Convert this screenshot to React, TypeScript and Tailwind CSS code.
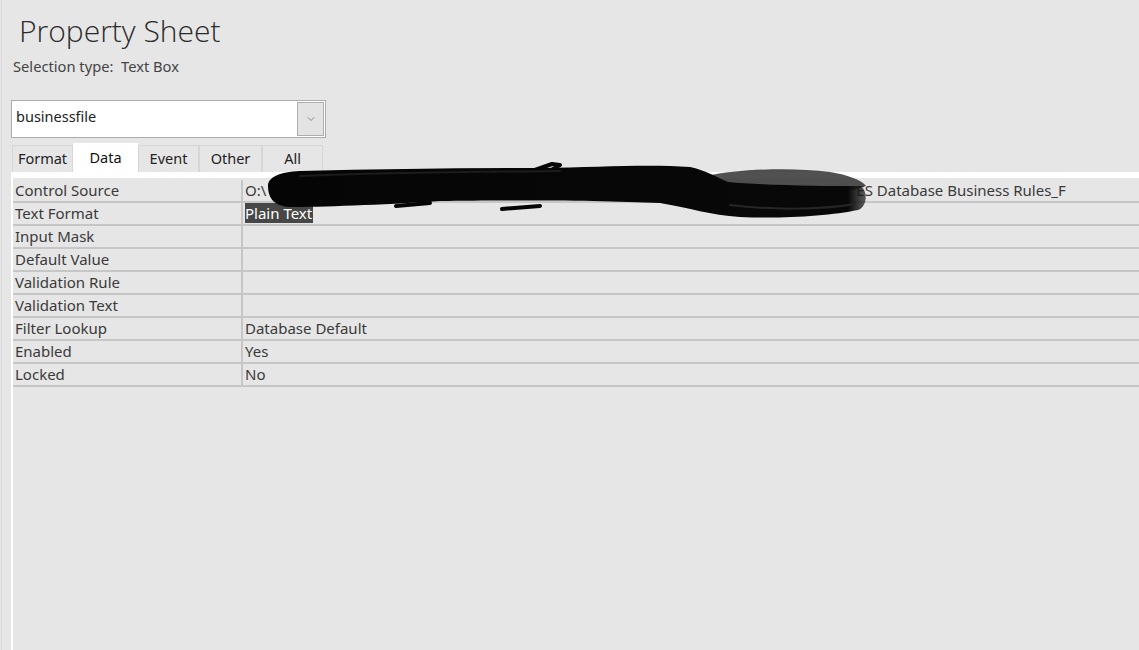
import { ChevronDown } from 'lucide-react';

const ROWS: { label: string; value?: string; selected?: boolean; path?: boolean }[] = [
  { label: 'Control Source', path: true },
  { label: 'Text Format', value: 'Plain Text', selected: true },
  { label: 'Input Mask' },
  { label: 'Default Value' },
  { label: 'Validation Rule' },
  { label: 'Validation Text' },
  { label: 'Filter Lookup', value: 'Database Default' },
  { label: 'Enabled', value: 'Yes' },
  { label: 'Locked', value: 'No' },
];

const TABS = [
  { name: 'Format', w: 'w-[61px]' },
  { name: 'Data', w: 'w-[65px]' },
  { name: 'Event', w: 'w-[61px]' },
  { name: 'Other', w: 'w-[63px]' },
  { name: 'All', w: 'w-[61px]' },
];

const font = 'font-["Noto_Sans","Liberation_Sans",sans-serif]';

export default function App() {
  return (
    <div className={`relative w-[1139px] h-[650px] overflow-hidden bg-[#e6e6e6] text-[#333] ${font}`}>
      <div className="flex h-full flex-col pl-px">
        <div className="flex h-full flex-col border-l border-[#d9d9d9]">
          {/* Header */}
          <h1 className='pl-[17px] pt-[11px] text-[30px] leading-[40px] font-light text-[#2b2b2b] font-["Open_Sans",sans-serif]'>
            Property Sheet
          </h1>
          <p className="pl-[11px] pt-[5px] text-[14.7px] leading-[20px] text-[#444]">Selection type:&nbsp; Text Box</p>

          {/* Object selector */}
          <div className="ml-[9px] mt-[24px] flex h-[38px] w-[315px] items-center border border-[#acacac] bg-white">
            <span className="flex-1 pl-[4px] pb-[4px] text-[14.5px] text-[#222]">businessfile</span>
            <div className="mr-px flex h-[34px] w-[27px] items-center justify-center border border-[#adadad] bg-[#e3e3e3]">
              <ChevronDown size={12} strokeWidth={1.25} className="text-[#555]" />
            </div>
          </div>

          {/* Tabs */}
          <div className="ml-[10px] mt-[5px] flex h-[29px] items-end">
            {TABS.map((t) =>
              t.name === 'Data' ? (
                <div
                  key={t.name}
                  className={`${t.w} flex h-[29px] items-start justify-center bg-white pt-[4px] text-[14.5px] text-[#111]`}
                >
                  {t.name}
                </div>
              ) : (
                <div
                  key={t.name}
                  className={`${t.w} flex h-[27px] items-center justify-center border border-b-0 border-[#d6d6d6] text-[14.5px] text-[#222]`}
                >
                  {t.name}
                </div>
              )
            )}
          </div>

          {/* Grid */}
          <div className="ml-[9px] flex-1 border-l-2 border-t-[6px] border-white">
            {ROWS.map((r, i) => (
              <div
                key={r.label}
                className={`flex border-b-2 border-[#c6c6c6] text-[15px] leading-[21px] text-[#3a3a3a] ${i === 0 ? 'h-[25px] pt-[2px]' : 'h-[23px]'}`}
              >
                <div className="w-[230px] shrink-0 border-r-2 border-[#c6c6c6] pl-[2px]">{r.label}</div>
                <div className="flex-1 whitespace-nowrap pl-[2px]">
                  {r.path ? (
                    <>
                      O:\<span className="inline-block w-[590px]" />ES Database Business Rules_F
                    </>
                  ) : r.selected ? (
                    <span className="bg-[#474747] pr-[1px] text-white">{r.value}</span>
                  ) : (
                    r.value
                  )}
                </div>
              </div>
            ))}
          </div>
        </div>
      </div>

      {/* redaction scribble */}
      <svg className="pointer-events-none absolute left-0 top-0" width="1139" height="650" viewBox="0 0 1139 650">
        <defs>
          <linearGradient id="fade" x1="0" x2="1" y1="0" y2="0">
            <stop offset="0" stopColor="#050505" />
            <stop offset="0.97" stopColor="#080808" />
            <stop offset="1" stopColor="#202020" stopOpacity="0.7" />
          </linearGradient>
        </defs>
        <path
          d="M706 176 C 740 169, 790 167, 830 172 C 848 175, 862 180, 866 186 L 854 190 C 820 186, 760 185, 720 184 Z"
          fill="#333"
          fillOpacity="0.85"
        />
        <path
          d="M268 186 C 268 177, 280 172, 300 171 C 380 169, 460 168, 540 168 C 600 167, 650 164, 690 167 C 705 170, 716 177, 728 182 C 760 185, 820 186, 860 186 C 868 190, 868 206, 858 210 C 830 216, 780 219, 740 217 C 710 215, 690 208, 660 203 C 600 200, 500 200, 440 201 C 380 205, 320 207, 290 207 C 272 206, 268 196, 268 186 Z"
          fill="url(#fade)"
        />
        <g fill="none" stroke="#050505" strokeLinecap="round" strokeLinejoin="round">
          <path d="M396 206 L 430 203" strokeWidth="4" />
          <path d="M502 209 L 540 206" strokeWidth="4" />
          <path d="M532 171 L 552 164 L 560 165 L 548 172" strokeWidth="4" />
          <path d="M300 176 C 400 172, 480 172, 560 171" strokeWidth="2" stroke="#1c1c1c" />
          <path d="M730 205 C 770 210, 820 210, 855 204" strokeWidth="2" stroke="#262626" />
        </g>
      </svg>
    </div>
  );
}
